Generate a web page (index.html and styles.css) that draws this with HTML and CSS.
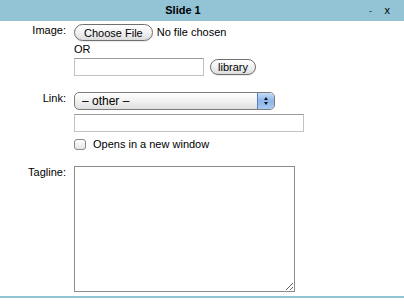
FILE: index.html
```html
<!DOCTYPE html>
<html lang="en">

<head>
        <meta charset="UTF-8">
        <meta name="viewport" content="width=device-width, initial-scale=1.0">
        <title>Slide 1</title>
        <link rel="stylesheet" href="styles.css">
</head>

<body>
        <div class="panel">
                <div class="titlebar">
                        <span class="title">Slide 1</span>
                        <span class="controls">
                                <span class="minimize">-</span>
                                <span class="close">x</span>
                        </span>
                </div>

                <form class="fields">
                        <div class="row row-image">
                                <label class="label">Image:</label>
                                <div class="field">
                                        <div class="line">
                                                <button type="button" class="pill choose">Choose File</button>
                                                <span class="nofile">No file chosen</span>
                                        </div>
                                        <div class="or">OR</div>
                                        <div class="line">
                                                <input type="text" class="text short">
                                                <button type="button" class="pill library">library</button>
                                        </div>
                                </div>
                        </div>

                        <div class="row row-link">
                                <label class="label">Link:</label>
                                <div class="field">
                                        <div class="selectbox">
                                                <select class="select">
                                                        <option>&ndash; other &ndash;</option>
                                                </select>
                                                <span class="stepper">
                                                        <span class="arrow up"></span>
                                                        <span class="arrow down"></span>
                                                </span>
                                        </div>
                                        <input type="text" class="text long">
                                        <label class="check">
                                                <input type="checkbox" class="box">
                                                <span>Opens in a new window</span>
                                        </label>
                                </div>
                        </div>

                        <div class="row row-tagline">
                                <label class="label">Tagline:</label>
                                <div class="field">
                                        <textarea class="tagline"></textarea>
                                </div>
                        </div>
                </form>

                <div class="bottomline"></div>
        </div>
</body>

</html>
```

FILE: styles.css
```css
body {
        margin: 0;
        background: #fff;
        font-family: "Liberation Sans", Arial, sans-serif;
        font-size: 11px;
        line-height: 13px;
        color: #000;
}

.panel {
        width: 404px;
}

.titlebar {
        height: 21px;
        background-color: #93c4d6;
        display: flex;
        align-items: center;
        justify-content: center;
        padding-right: 38px;
        position: relative;
}

.title {
        font-weight: bold;
        font-size: 11px;
}

.controls {
        position: absolute;
        right: 14px;
        top: 4px;
        display: flex;
        gap: 12px;
        font-size: 11px;
}

.minimize {
        color: #3d5560;
}

.fields {
        padding-top: 3px;
}

.row {
        display: grid;
        grid-template-columns: 66px 1fr;
        column-gap: 8px;
}

.label {
        text-align: right;
        line-height: 12px;
}

.field {
        display: flex;
        flex-direction: column;
        align-items: flex-start;
}

.line {
        display: flex;
        align-items: center;
}

.pill {
        height: 17px;
        padding: 0 9px;
        border: 1px solid #6f6f6f;
        border-radius: 9px;
        background: linear-gradient(#ffffff, #f1f1f1 50%, #dcdcdc);
        font-family: "Liberation Sans", Arial, sans-serif;
        font-size: 11px;
        color: #000;
        box-shadow: 0 1px 0 rgba(0, 0, 0, 0.08);
}

.nofile {
        margin-left: 4px;
}

.or {
        margin-top: 2px;
}

.text {
        height: 18px;
        box-sizing: border-box;
        border: 1px solid #c2c2c2;
        border-top-color: #9a9a9a;
        margin: 0;
        padding: 1px 3px;
        font-family: "Liberation Sans", Arial, sans-serif;
        font-size: 11px;
}

.short {
        width: 130px;
        margin-top: 2px;
}

.library {
        margin-left: 6px;
        margin-top: 2px;
        height: 16px;
        padding: 0 7px;
}

.row-link {
        margin-top: 16px;
}

.selectbox {
        width: 201px;
        height: 18px;
        box-sizing: border-box;
        border: 1px solid #7d7d7d;
        border-radius: 5px;
        background: linear-gradient(#ffffff, #f3f3f3 45%, #dedede);
        display: flex;
        overflow: hidden;
}

.select {
        flex: 1;
        appearance: none;
        border: none;
        background: transparent;
        font-family: "Liberation Sans", Arial, sans-serif;
        font-size: 12px;
        padding: 0 0 0 7px;
        outline: none;
}

.stepper {
        width: 16px;
        border-left: 1px solid #5a7fc0;
        background: linear-gradient(#c7dcf6, #8db6ea 50%, #a9caf2);
        display: flex;
        flex-direction: column;
        align-items: center;
        justify-content: center;
        gap: 2px;
}

.arrow {
        width: 0;
        height: 0;
        border-left: 2px solid transparent;
        border-right: 2px solid transparent;
}

.up {
        border-bottom: 3px solid #111;
}

.down {
        border-top: 3px solid #111;
}

.long {
        width: 230px;
        margin-top: 4px;
}

.check {
        display: flex;
        align-items: center;
        height: 12px;
        margin-top: 6px;
}

.box {
        appearance: none;
        width: 12px;
        height: 11px;
        margin: 0 7px 0 0;
        border: 1px solid #8a8a8a;
        border-radius: 3px;
        background: linear-gradient(#ffffff, #e6e6e6);
}

.row-tagline {
        margin-top: 16px;
}

.tagline {
        width: 221px;
        height: 126px;
        box-sizing: border-box;
        border: 1px solid #8c8c8c;
        margin: 0;
        font-family: "Liberation Sans", Arial, sans-serif;
        font-size: 11px;
        display: block;
}

.bottomline {
        margin-top: 4px;
        height: 2px;
        background-color: #93c4d6;
}
```
